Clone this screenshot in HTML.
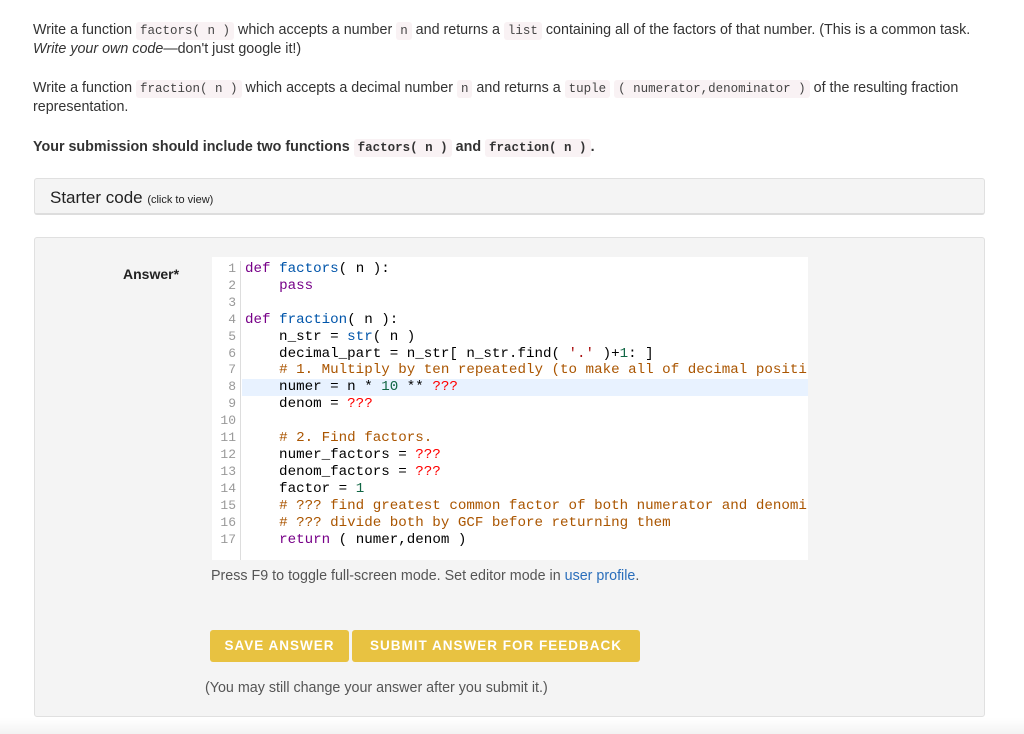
<!DOCTYPE html>
<html><head><meta charset="utf-8"><style>
*{margin:0;padding:0;box-sizing:border-box}
body{width:1024px;height:734px;background:#fff;font-family:"Liberation Sans",Arial,sans-serif;font-size:14.3px;color:#333;position:relative;overflow:hidden}
.t{position:absolute;left:33px;white-space:nowrap;line-height:19px}
code{font-family:"Liberation Mono",monospace;font-size:12.5px;background:#f9f2f4;color:#444;padding:2px 4px;border-radius:3px}
b code{font-weight:bold;color:#333}
.box{position:absolute;left:34px;width:951px;background:#f4f4f4;border:1px solid #e0e0e0;border-radius:3px}
.ed{position:absolute;left:212px;top:257px;width:596px;height:303px;background:#fff;font-family:"Liberation Mono",monospace;font-size:14.2px;line-height:16.9px;overflow:hidden}
.gut{position:absolute;left:0;top:4px;width:29px;height:299px;background:#fff;border-right:1px solid #ddd;text-align:right;padding-right:4px;color:#999;font-size:13px}
.code{position:absolute;left:33px;top:4px;white-space:pre;color:#000}
.hl{position:absolute;left:30px;top:122px;width:566px;height:17px;background:#e8f2ff}
.k{color:#708}.f{color:#05a}.c{color:#a50}.n{color:#164}.e{color:#f00}.s{color:#a11}
.btn{position:absolute;top:630px;height:32px;background:#e8c241;color:#fff;font-weight:bold;font-size:13.5px;letter-spacing:1px;line-height:32px;text-align:center;border-radius:3px}
</style></head><body>
<div style="position:absolute;left:0;top:718px;width:1024px;height:16px;background:linear-gradient(#fff,#f3f3f3)"></div>
<div class="t" style="top:21px">Write a function <code>factors( n )</code> which accepts a number <code>n</code> and returns a <code>list</code> containing all of the factors of that number. (This is a common task.</div>
<div class="t" style="top:40px"><i>Write your own code</i>—don't just google it!)</div>
<div class="t" style="top:79px">Write a function <code>fraction( n )</code> which accepts a decimal number <code>n</code> and returns a <code>tuple</code> <code>( numerator,denominator )</code> of the resulting fraction</div>
<div class="t" style="top:98px">representation.</div>
<div class="t" style="top:138px"><b>Your submission should include two functions <code>factors( n )</code> and <code>fraction( n )</code>.</b></div>
<div class="box" style="top:178px;height:37px;border-bottom:2px solid #ddd"><span style="position:absolute;left:15px;top:9px;font-size:17px;color:#222">Starter code <span style="font-size:11px">(click to view)</span></span></div>
<div class="box" style="top:237px;height:480px"></div>
<div style="position:absolute;left:123px;top:266px;font-weight:bold;font-size:14px;color:#222">Answer*</div>
<div class="ed"><div class="gut">1<br>2<br>3<br>4<br>5<br>6<br>7<br>8<br>9<br>10<br>11<br>12<br>13<br>14<br>15<br>16<br>17</div><div class="hl"></div>
<div class="code"><span class="k">def</span> <span class="f">factors</span>( n ):
    <span class="k">pass</span>

<span class="k">def</span> <span class="f">fraction</span>( n ):
    n_str = <span class="f">str</span>( n )
    decimal_part = n_str[ n_str.find( <span class="s">'.'</span> )+<span class="n">1</span>: ]
    <span class="c"># 1. Multiply by ten repeatedly (to make all of decimal positi</span>
    numer = n * <span class="n">10</span> ** <span class="e">???</span>
    denom = <span class="e">???</span>

    <span class="c"># 2. Find factors.</span>
    numer_factors = <span class="e">???</span>
    denom_factors = <span class="e">???</span>
    factor = <span class="n">1</span>
    <span class="c"># ??? find greatest common factor of both numerator and denomi</span>
    <span class="c"># ??? divide both by GCF before returning them</span>
    <span class="k">return</span> ( numer,denom )</div></div>
<div style="position:absolute;left:211px;top:568px;color:#555">Press F9 to toggle full-screen mode. Set editor mode in <span style="color:#2a6ebb">user profile</span>.</div>
<div class="btn" style="left:210px;width:139px">SAVE ANSWER</div>
<div class="btn" style="left:352px;width:288px">SUBMIT ANSWER FOR FEEDBACK</div>
<div style="position:absolute;left:205px;top:680px;color:#555">(You may still change your answer after you submit it.)</div>
</body></html>
